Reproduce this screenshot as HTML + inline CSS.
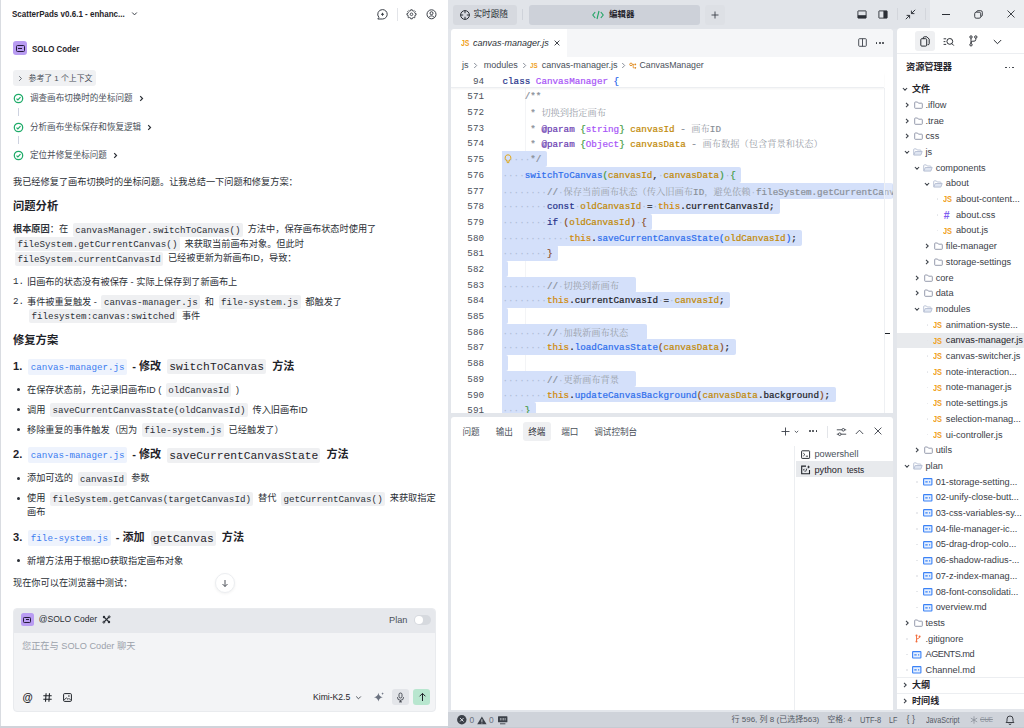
<!DOCTYPE html>
<html lang="zh">
<head>
<meta charset="utf-8">
<title>ScatterPads</title>
<style>
*{box-sizing:border-box;margin:0;padding:0}
html,body{width:1024px;height:728px;overflow:hidden}
body{background:#e3e6eb;font-family:"Liberation Sans","Noto Sans CJK SC",sans-serif;font-size:9.2px;color:#2b2f36;position:relative}
.abs{position:absolute}
svg{display:block;overflow:visible}
code,.mono{font-family:"Liberation Mono","Noto Sans CJK SC",monospace}
#left{position:absolute;left:0;top:0;width:448px;height:726px;background:#fff}
#topbar{position:absolute;left:0;top:0;width:0;height:0}
#editor{position:absolute;left:451px;top:29px;width:442px;height:384px;background:#fff;border-radius:4px 4px 0 0;overflow:hidden}
#term{position:absolute;left:451px;top:417px;width:442px;height:292.5px;background:#fff;overflow:hidden;border-radius:3px 3px 0 0}
#explorer{position:absolute;left:897px;top:28px;width:127px;height:681px;background:#fff;border-radius:4px 0 0 0;overflow:hidden}
#status{position:absolute;left:0;top:0;width:0;height:0}
.st{line-height:14px;font-size:8.55px;color:#4a505a;white-space:nowrap}
.p{line-height:14px;font-size:9.2px;color:#2b2f36;white-space:nowrap}
.p code{font-size:9.2px;line-height:9px;background:#eff0f2;border-radius:2px;padding:1.5px 2.5px;margin:0 2px;color:#2b2f36}
.h2{line-height:16px;font-size:11.3px;font-weight:bold;color:#1f2329;white-space:nowrap}
.h3{line-height:16px;font-size:11.1px;font-weight:bold;color:#1f2329;white-space:nowrap}
.h3 code{font-weight:normal;font-size:11.3px;line-height:10px;background:#eff0f2;border-radius:2px;padding:1.5px 2px;margin:0 3px}
.h3 code.lk{font-size:9.2px;color:#3b7cf0;background:#eef3fd;padding:2.5px 2.5px;margin:0 2px 0 3px;position:relative;top:-0.5px}
.bl{width:3px;height:3px;border-radius:2px;background:#2b2f36}
/* code */
.cl,.ln{font-family:"Liberation Mono","Noto Serif CJK SC",monospace;font-size:9.26px;line-height:15.69px;white-space:pre;color:#1f2329;-webkit-text-stroke:0.22px currentColor}
.ln{text-align:right;color:#4a505a;-webkit-text-stroke:0}
.cl .cmz{font-family:"Noto Serif CJK SC",serif;font-size:9.26px;color:#9aa0a9;-webkit-text-stroke:0}
.cm{color:#8a9099}.kw{color:#27348b}.ty{color:#a855f7}.fn{color:#2f6fed}.va{color:#c28a07}.th{color:#d08a0a}.tx{color:#1f2329}
.tag{color:#6d3fb3}.b1{color:#2563eb}.b2{color:#3f9a3f}.b3{color:#8a4b1f}
.wsd{color:#aebcd6;-webkit-text-stroke:0}
.sel{background:#d4e0fa;border-radius:0 2px 2px 0}
</style>
</head>
<body>
<div id="left"><!--LEFT-->
<div class="abs" style="left:0;top:0;width:1px;height:728px;background:#d9dce1"></div>
<!-- header -->
<div class="abs ttl" style="left:12px;top:7px;line-height:14px;font-size:9.3px;font-weight:bold;color:#1f2329;transform:scaleX(0.862);transform-origin:0 0;white-space:nowrap">ScatterPads v0.6.1 - enhanc...</div>
<svg class="abs" style="left:131px;top:11px" width="7" height="6" viewBox="0 0 7 6"><path d="M1.2 1.5 L3.5 3.9 L5.8 1.5" fill="none" stroke="#3b4048" stroke-width="1"/></svg>
<svg class="abs" style="left:376px;top:8px" width="13" height="13" viewBox="0 0 13 13"><path d="M6.5 1.6a4.7 4.7 0 1 1 0 9.4H1.8l1.1-1.6A4.7 4.7 0 0 1 6.5 1.6z" fill="none" stroke="#3b4048" stroke-width="1"/><path d="M6.5 4.8v3M5 6.3h3" stroke="#3b4048" stroke-width="1" fill="none"/></svg>
<div class="abs" style="left:397px;top:8px;width:1px;height:13px;background:#e3e5e9"></div>
<svg class="abs" style="left:405px;top:8px" width="13" height="13" viewBox="0 0 13 13"><path d="M5.71 1.77 L7.29 1.77 L7.36 2.70 L8.43 3.15 L9.15 2.54 L10.26 3.65 L9.65 4.37 L10.10 5.44 L11.03 5.51 L11.03 7.09 L10.10 7.16 L9.65 8.23 L10.26 8.95 L9.15 10.06 L8.43 9.45 L7.36 9.90 L7.29 10.83 L5.71 10.83 L5.64 9.90 L4.57 9.45 L3.85 10.06 L2.74 8.95 L3.35 8.23 L2.90 7.16 L1.97 7.09 L1.97 5.51 L2.90 5.44 L3.35 4.37 L2.74 3.65 L3.85 2.54 L4.57 3.15 L5.64 2.70z" fill="none" stroke="#3b4048" stroke-width="0.95" stroke-linejoin="round"/><circle cx="6.5" cy="6.3" r="1.3" fill="none" stroke="#3b4048" stroke-width="0.9"/></svg>
<svg class="abs" style="left:425px;top:8px" width="13" height="13" viewBox="0 0 13 13"><circle cx="6.5" cy="6.3" r="4.5" fill="none" stroke="#3b4048" stroke-width="1"/><circle cx="6.5" cy="5.2" r="1.5" fill="none" stroke="#3b4048" stroke-width="1"/><path d="M3.7 9.7c.6-1.3 1.5-1.8 2.8-1.8s2.2.5 2.8 1.8" fill="none" stroke="#3b4048" stroke-width="1"/></svg>
<!-- SOLO coder -->
<div class="abs" style="left:13px;top:41px;width:14px;height:14px;border-radius:3px;background:#b99cf2"></div>
<div class="abs" style="left:15.5px;top:45px;width:9px;height:6.5px;border-radius:1.5px;border:1.5px solid #241a3a;background:#b99cf2"></div>
<div class="abs" style="left:18.3px;top:47.6px;width:3.4px;height:1.3px;background:#241a3a"></div>
<div class="abs" style="left:31.5px;top:41px;line-height:15px;font-size:9.5px;font-weight:bold;color:#1f2329;transform:scaleX(0.83);transform-origin:0 0;white-space:nowrap">SOLO Coder</div>
<!-- pill -->
<div class="abs" style="left:13px;top:70px;width:83px;height:15.5px;border-radius:3px;background:#f0f1f3"></div>
<svg class="abs" style="left:17.5px;top:75px" width="5" height="7" viewBox="0 0 5 7"><path d="M1.2 1.2 L3.5 3.5 L1.2 5.8" fill="none" stroke="#5a616b" stroke-width="0.9"/></svg>
<div class="abs" style="left:28.5px;top:71.5px;line-height:14px;font-size:7.9px;color:#4a505a;white-space:nowrap">参考了 1 个上下文</div>
<!-- steps -->
<svg class="abs" style="left:12.5px;top:93px" width="11" height="11" viewBox="0 0 11 11"><circle cx="5.5" cy="5.5" r="4.2" fill="none" stroke="#1fab69" stroke-width="1.25"/><path d="M3.5 5.6 L4.9 7 L7.5 4.2" fill="none" stroke="#1fab69" stroke-width="1.2"/></svg>
<div class="abs st" style="left:30px;top:91px">调查画布切换时的坐标问题</div>
<svg class="abs" style="left:138.5px;top:95px" width="5" height="7" viewBox="0 0 5 7"><path d="M1.2 1.2 L3.5 3.5 L1.2 5.8" fill="none" stroke="#2b2f36" stroke-width="1.2"/></svg>
<div class="abs" style="left:18px;top:108px;width:1px;height:8px;background:#cdd2e0"></div>
<svg class="abs" style="left:12.5px;top:121.5px" width="11" height="11" viewBox="0 0 11 11"><circle cx="5.5" cy="5.5" r="4.2" fill="none" stroke="#1fab69" stroke-width="1.25"/><path d="M3.5 5.6 L4.9 7 L7.5 4.2" fill="none" stroke="#1fab69" stroke-width="1.2"/></svg>
<div class="abs st" style="left:30px;top:119.5px">分析画布坐标保存和恢复逻辑</div>
<svg class="abs" style="left:147px;top:123.5px" width="5" height="7" viewBox="0 0 5 7"><path d="M1.2 1.2 L3.5 3.5 L1.2 5.8" fill="none" stroke="#2b2f36" stroke-width="1.2"/></svg>
<div class="abs" style="left:18px;top:136px;width:1px;height:8px;background:#cdd2e0"></div>
<svg class="abs" style="left:12.5px;top:150px" width="11" height="11" viewBox="0 0 11 11"><circle cx="5.5" cy="5.5" r="4.2" fill="none" stroke="#1fab69" stroke-width="1.25"/><path d="M3.5 5.6 L4.9 7 L7.5 4.2" fill="none" stroke="#1fab69" stroke-width="1.2"/></svg>
<div class="abs st" style="left:30px;top:148px">定位并修复坐标问题</div>
<svg class="abs" style="left:112.5px;top:152px" width="5" height="7" viewBox="0 0 5 7"><path d="M1.2 1.2 L3.5 3.5 L1.2 5.8" fill="none" stroke="#2b2f36" stroke-width="1.2"/></svg>
<!-- content -->
<div class="abs p" style="left:13px;top:174.5px">我已经修复了画布切换时的坐标问题。让我总结一下问题和修复方案：</div>
<div class="abs h2" style="left:13px;top:198px">问题分析</div>
<div class="abs p" style="left:13px;top:222.3px;white-space:nowrap;line-height:14.5px"><b>根本原因</b>：在 <code>canvasManager.switchToCanvas()</code> 方法中，保存画布状态时使用了<br><code>fileSystem.getCurrentCanvas()</code> 来获取当前画布对象。但此时<br><code>fileSystem.currentCanvasId</code> 已经被更新为新画布ID，导致：</div>
<div class="abs p mono" style="left:13px;top:274.5px">1.</div>
<div class="abs p" style="left:27px;top:274.5px">旧画布的状态没有被保存 - 实际上保存到了新画布上</div>
<div class="abs p mono" style="left:13px;top:294.5px">2.</div>
<div class="abs p" style="left:27px;top:294.5px;white-space:nowrap;line-height:14px">事件被重复触发 - <code>canvas-manager.js</code> 和 <code>file-system.js</code> 都触发了<br><code>filesystem:canvas:switched</code> 事件</div>
<div class="abs h2" style="left:13px;top:332px">修复方案</div>
<div class="abs h3" style="left:13px;top:357.5px">1. <code class="lk">canvas-manager.js</code> - 修改 <code>switchToCanvas</code> 方法</div>
<div class="abs bl" style="left:16.5px;top:388px"></div><div class="abs p" style="left:27px;top:382.5px">在保存状态前，先记录旧画布ID ( <code>oldCanvasId</code> )</div>
<div class="abs bl" style="left:16.5px;top:408px"></div><div class="abs p" style="left:27px;top:402.5px">调用 <code>saveCurrentCanvasState(oldCanvasId)</code> 传入旧画布ID</div>
<div class="abs bl" style="left:16.5px;top:428px"></div><div class="abs p" style="left:27px;top:422.5px">移除重复的事件触发（因为 <code>file-system.js</code> 已经触发了）</div>
<div class="abs h3" style="left:13px;top:446px">2. <code class="lk">canvas-manager.js</code> - 修改 <code>saveCurrentCanvasState</code> 方法</div>
<div class="abs bl" style="left:16.5px;top:476.5px"></div><div class="abs p" style="left:27px;top:471px">添加可选的 <code>canvasId</code> 参数</div>
<div class="abs bl" style="left:16.5px;top:496.5px"></div><div class="abs p" style="left:27px;top:491px;white-space:nowrap;line-height:14px">使用 <code>fileSystem.getCanvas(targetCanvasId)</code> 替代 <code>getCurrentCanvas()</code> 来获取指定<br>画布</div>
<div class="abs h3" style="left:13px;top:529px">3. <code class="lk">file-system.js</code> - 添加 <code>getCanvas</code> 方法</div>
<div class="abs bl" style="left:16.5px;top:559px"></div><div class="abs p" style="left:27px;top:553.5px">新增方法用于根据ID获取指定画布对象</div>
<div class="abs p" style="left:13px;top:576.3px">现在你可以在浏览器中测试：</div>
<div class="abs" style="left:214.5px;top:573.3px;width:20px;height:20px;border-radius:10px;background:#fff;border:1px solid #eceef1;box-shadow:0 1px 3px rgba(0,0,0,.06)"></div>
<svg class="abs" style="left:220.5px;top:579px" width="8" height="9" viewBox="0 0 8 9"><path d="M4 1v6.5M1.5 5 L4 7.5 L6.5 5" fill="none" stroke="#3b4048" stroke-width="0.9"/></svg>
<!-- input box -->
<div class="abs" style="left:13px;top:608px;width:423px;height:104px;border-radius:4px;background:#f3f4f6;border:1px solid #e9ebee;overflow:hidden"><div style="height:23.5px;background:#e6e8ec"></div></div>
<div class="abs" style="left:21px;top:613px;width:12.5px;height:12.5px;border-radius:2.5px;background:#b99cf2"></div>
<div class="abs" style="left:23.2px;top:616.5px;width:8px;height:6px;border-radius:1.3px;border:1.4px solid #241a3a"></div>
<div class="abs" style="left:25.8px;top:618.9px;width:2.9px;height:1.2px;background:#241a3a"></div>
<div class="abs" style="left:38.7px;top:612.3px;line-height:14px;font-size:8.6px;color:#2b2f36;white-space:nowrap">@SOLO Coder</div>
<svg class="abs" style="left:101.5px;top:615px" width="9" height="9" viewBox="0 0 9 9"><path d="M1.5 1.5 L7.5 7.5 M7.5 1.5 L1.5 7.5" stroke="#2b2f36" stroke-width="1.1" fill="none"/><circle cx="2" cy="2" r="1.2" fill="#2b2f36"/><circle cx="7" cy="7" r="1.2" fill="#2b2f36"/><circle cx="7.2" cy="1.8" r="1" fill="none" stroke="#2b2f36" stroke-width="0.8"/><circle cx="1.8" cy="7.2" r="1" fill="none" stroke="#2b2f36" stroke-width="0.8"/></svg>
<div class="abs" style="left:389px;top:612.5px;line-height:14px;font-size:9.2px;color:#4a505a">Plan</div>
<div class="abs" style="left:413.7px;top:614.5px;width:17px;height:10px;border-radius:5px;background:#d6d9de"></div>
<div class="abs" style="left:414.7px;top:615.5px;width:8px;height:8px;border-radius:4px;background:#fff"></div>
<div class="abs" style="left:22px;top:638.5px;line-height:14px;font-size:9.2px;color:#9ca2ab">您正在与 SOLO Coder 聊天</div>
<!-- bottom icons -->
<div class="abs" style="left:22px;top:690px;width:11px;line-height:14px;font-size:10.5px;color:#1f2329;text-align:center;font-weight:bold">@</div>
<svg class="abs" style="left:43px;top:692.5px" width="9" height="9" viewBox="0 0 9 9"><path d="M3.1 0.3 L2.5 8.7 M6.5 0.3 L5.9 8.7 M0.3 2.8h8.4M0.3 6.2h8.4" stroke="#1f2329" stroke-width="1.1" fill="none"/></svg>
<svg class="abs" style="left:62.5px;top:692.5px" width="9" height="9" viewBox="0 0 9 9"><rect x="0.6" y="0.6" width="7.8" height="7.8" rx="1" fill="none" stroke="#1f2329" stroke-width="1"/><path d="M1 7.2 L3.4 4.8 L5 6.4 L6 5.4 L8 7.4" fill="none" stroke="#1f2329" stroke-width="0.9"/><circle cx="5.9" cy="3" r="0.8" fill="#1f2329"/></svg>
<div class="abs" style="left:313px;top:690px;line-height:14px;font-size:8.6px;color:#1f2329">Kimi-K2.5</div>
<svg class="abs" style="left:354.5px;top:694.5px" width="7" height="6" viewBox="0 0 7 6"><path d="M1.2 1.5 L3.5 3.8 L5.8 1.5" fill="none" stroke="#3b4048" stroke-width="0.9"/></svg>
<svg class="abs" style="left:373px;top:691px" width="12" height="12" viewBox="0 0 12 12"><path d="M5.4 1.8 Q5.9 5.6 9.8 6.2 Q5.9 6.8 5.4 10.6 Q4.9 6.8 1 6.2 Q4.9 5.6 5.4 1.8z" fill="#6b7280"/><path d="M9.6 1.2l.4 1 .9.4-.9.4-.4 1-.4-1-.9-.4.9-.4z" fill="#6b7280"/></svg>
<div class="abs" style="left:392px;top:688.7px;width:17px;height:16.5px;border-radius:3px;background:#e3e5e9"></div>
<svg class="abs" style="left:396px;top:691.5px" width="9" height="11" viewBox="0 0 9 11"><rect x="3" y="1" width="3" height="5" rx="1.5" fill="none" stroke="#3b4048" stroke-width="0.9"/><path d="M1.4 5.2a3.1 3.1 0 0 0 6.2 0M4.5 8.3v1.6M3 9.9h3" fill="none" stroke="#3b4048" stroke-width="0.9"/></svg>
<div class="abs" style="left:413.2px;top:688.7px;width:17px;height:16.5px;border-radius:3px;background:#b8e6cf"></div>
<svg class="abs" style="left:417.5px;top:692px" width="9" height="10" viewBox="0 0 9 10"><path d="M4.5 9V1.5M1.6 4.3 L4.5 1.4 L7.4 4.3" fill="none" stroke="#1f2329" stroke-width="1"/></svg>
<!-- bottom/right borders -->
<div class="abs" style="left:0;top:726px;width:449px;height:2px;background:#d0d3da"></div>

<!--/LEFT--></div>
<div id="topbar"><!--TOPBAR-->
<div class="abs" style="left:448px;top:0;width:482px;height:29px;background:#e1e4e9"></div>
<div class="abs" style="left:930px;top:0;width:94px;height:28px;background:#eceef1"></div>
<div class="abs" style="left:453px;top:4.5px;width:63.5px;height:20px;border-radius:3px;background:#d6d9df"></div>
<svg class="abs" style="left:458.5px;top:8.5px" width="12" height="12" viewBox="0 0 12 12"><circle cx="6" cy="6" r="4.4" fill="none" stroke="#2b2f36" stroke-width="1"/><path d="M6 1.6v2.6M6 7.8v2.6M1.6 6h2.6M7.8 6h2.6" stroke="#2b2f36" stroke-width="1"/></svg>
<div class="abs" style="left:473.5px;top:7.3px;line-height:14px;font-size:8.6px;color:#2b2f36;white-space:nowrap">实时跟随</div>
<div class="abs" style="left:522px;top:9px;width:1px;height:11px;background:#cfd3da"></div>
<div class="abs" style="left:528.7px;top:4.5px;width:171px;height:20px;border-radius:3px;background:#cdd1d9"></div>
<svg class="abs" style="left:592px;top:9.5px" width="12" height="10" viewBox="0 0 12 10"><path d="M3.2 2 L0.8 5 L3.2 8 M8.8 2 L11.2 5 L8.8 8 M7 1 L5 9" fill="none" stroke="#22a565" stroke-width="1.1"/></svg>
<div class="abs" style="left:609px;top:7.3px;line-height:14px;font-size:8.5px;font-weight:bold;color:#1f2329;white-space:nowrap">编辑器</div>
<div class="abs" style="left:705px;top:4.5px;width:20px;height:20px;border-radius:3px;background:#dde0e5"></div>
<svg class="abs" style="left:711px;top:10.5px" width="8" height="8" viewBox="0 0 8 8"><path d="M4 0.5v7M0.5 4h7" stroke="#3b4048" stroke-width="0.9"/></svg>
<svg class="abs" style="left:857px;top:9.5px" width="10" height="9" viewBox="0 0 10 9"><rect x="0.9" y="0.9" width="8.2" height="7.2" rx="0.3" fill="none" stroke="#2b2f36" stroke-width="0.9"/><rect x="0.9" y="5.2" width="8.2" height="2.9" fill="#2b2f36"/></svg>
<svg class="abs" style="left:877.5px;top:9.5px" width="10" height="9" viewBox="0 0 10 9"><rect x="0.9" y="0.9" width="8.2" height="7.2" rx="0.3" fill="none" stroke="#2b2f36" stroke-width="0.9"/><rect x="5.4" y="0.9" width="3.7" height="7.2" fill="#2b2f36"/></svg>
<div class="abs" style="left:896.5px;top:8px;width:1px;height:12px;background:#d3d6dc"></div>
<svg class="abs" style="left:905.3px;top:8.7px" width="11" height="11" viewBox="0 0 11 11"><path d="M10.2 0.8 L6.4 4.6 M6.4 1.6 V4.6 H9.4 M0.8 10.2 L4.6 6.4 M4.6 9.4 V6.4 H1.6" fill="none" stroke="#2b2f36" stroke-width="0.95"/></svg>
<div class="abs" style="left:924.5px;top:8px;width:1px;height:12px;background:#d3d6dc"></div>
<div class="abs" style="left:941.5px;top:13.5px;width:8.5px;height:1px;background:#2b2f36"></div>
<svg class="abs" style="left:974px;top:9.5px" width="9" height="9" viewBox="0 0 9 9"><rect x="0.7" y="2.2" width="6" height="6" rx="1.5" fill="none" stroke="#2b2f36" stroke-width="0.9"/><path d="M2.5 2 Q2.7 0.7 4 0.7 H6.8 Q8.3 0.7 8.3 2.2 V5 Q8.3 6.3 7 6.5" fill="none" stroke="#2b2f36" stroke-width="0.9"/></svg>
<svg class="abs" style="left:1007px;top:10px" width="8" height="8" viewBox="0 0 8 8"><path d="M0.5 0.5 L7.5 7.5 M7.5 0.5 L0.5 7.5" stroke="#2b2f36" stroke-width="0.9"/></svg>
<!--/TOPBAR--></div>
<div id="editor"><!--EDITOR-->
<div class="abs" style="left:0.00px;top:0.00px;width:442px;height:27.5px;background:#f5f6f8"></div>
<div class="abs" style="left:0.00px;top:0.00px;width:115.5px;height:27.5px;background:#fff"></div>
<div class="abs" style="left:10.00px;top:7.30px;line-height:14px;font-size:8.6px;font-weight:bold;color:#f0a11c;transform:scaleX(.8);transform-origin:0 0">JS</div>
<div class="abs" style="left:22.00px;top:7.00px;line-height:14px;font-size:9.0px;font-style:italic;color:#2b2f36;white-space:nowrap">canvas-manager.js</div>
<svg class="abs" style="left:102.5px;top:11px" width="6" height="6" viewBox="0 0 6 6"><path d="M0.6 0.6 L5.4 5.4 M5.4 0.6 L0.6 5.4" stroke="#2b2f36" stroke-width="0.9"/></svg>
<svg class="abs" style="left:406.5px;top:9.299999999999997px" width="9" height="9" viewBox="0 0 9 9"><rect x="0.7" y="0.7" width="7.6" height="7.6" rx="0.8" fill="none" stroke="#3b4048" stroke-width="0.9"/><path d="M4.5 0.7v7.6" stroke="#3b4048" stroke-width="0.9"/></svg>
<div class="abs" style="left:424.60px;top:13.00px;width:1.9px;height:1.9px;border-radius:1px;background:#2b2f36"></div>
<div class="abs" style="left:428.00px;top:13.00px;width:1.9px;height:1.9px;border-radius:1px;background:#2b2f36"></div>
<div class="abs" style="left:431.40px;top:13.00px;width:1.9px;height:1.9px;border-radius:1px;background:#2b2f36"></div>
<div class="abs" style="left:11.00px;top:29.30px;line-height:14px;font-size:9.05px;color:#4a505a;white-space:nowrap">js</div>
<div class="abs" style="left:32.70px;top:29.30px;line-height:14px;font-size:9.05px;color:#4a505a;white-space:nowrap">modules</div>
<div class="abs" style="left:90.70px;top:29.30px;line-height:14px;font-size:9.05px;color:#4a505a;white-space:nowrap">canvas-manager.js</div>
<div class="abs" style="left:188.50px;top:29.30px;line-height:14px;font-size:9.05px;color:#4a505a;white-space:nowrap;font-size:8.75px">CanvasManager</div>
<svg class="abs" style="left:21.5px;top:33.3px" width="5" height="7" viewBox="0 0 5 7"><path d="M1.2 1 L3.7 3.5 L1.2 6" fill="none" stroke="#6b7280" stroke-width="0.8"/></svg>
<svg class="abs" style="left:71px;top:33.3px" width="5" height="7" viewBox="0 0 5 7"><path d="M1.2 1 L3.7 3.5 L1.2 6" fill="none" stroke="#6b7280" stroke-width="0.8"/></svg>
<svg class="abs" style="left:169.5px;top:33.3px" width="5" height="7" viewBox="0 0 5 7"><path d="M1.2 1 L3.7 3.5 L1.2 6" fill="none" stroke="#6b7280" stroke-width="0.8"/></svg>
<div class="abs" style="left:79.00px;top:29.80px;line-height:14px;font-size:7.8px;font-weight:bold;color:#f0a11c;transform:scaleX(.8);transform-origin:0 0">JS</div>
<svg class="abs" style="left:177.5px;top:32.5px" width="8" height="8" viewBox="0 0 8 8"><circle cx="2" cy="2.4" r="1.3" fill="none" stroke="#e08a1e" stroke-width="0.9"/><path d="M3.3 2.4H5.2 M4.2 2.4V5.8H5.2" fill="none" stroke="#e08a1e" stroke-width="0.8"/><circle cx="6.3" cy="2.4" r="0.9" fill="#e08a1e"/><circle cx="6.3" cy="5.8" r="0.9" fill="#e08a1e"/></svg>
<div class="abs" style="left:0;top:59px;width:442px;height:325px;overflow:hidden" id="code">
<div class="abs" style="left:73.72px;top:0.00px;width:1px;height:325.00px;background:#f3f4f6"></div>
<div class="abs" style="left:95.94px;top:157.31px;width:1px;height:0.00px;background:#f3f4f6"></div>
<div class="abs sel" style="left:50.70px;top:63.16px;width:45.14px;height:15.99px"></div>
<div class="abs sel" style="left:50.70px;top:78.85px;width:239.56px;height:15.99px"></div>
<div class="abs sel" style="left:50.70px;top:94.54px;width:391.50px;height:15.99px"></div>
<div class="abs sel" style="left:50.70px;top:110.23px;width:278.45px;height:15.99px"></div>
<div class="abs sel" style="left:50.70px;top:125.92px;width:150.68px;height:15.99px"></div>
<div class="abs sel" style="left:50.70px;top:141.62px;width:300.67px;height:15.99px"></div>
<div class="abs sel" style="left:50.70px;top:157.31px;width:56.25px;height:15.99px"></div>
<div class="abs sel" style="left:50.70px;top:173.00px;width:6.25px;height:15.99px"></div>
<div class="abs sel" style="left:50.70px;top:188.68px;width:134.02px;height:15.99px"></div>
<div class="abs sel" style="left:50.70px;top:204.38px;width:228.45px;height:15.99px"></div>
<div class="abs sel" style="left:50.70px;top:220.06px;width:6.25px;height:15.99px"></div>
<div class="abs sel" style="left:50.70px;top:235.75px;width:145.13px;height:15.99px"></div>
<div class="abs sel" style="left:50.70px;top:251.44px;width:234.01px;height:15.99px"></div>
<div class="abs sel" style="left:50.70px;top:267.13px;width:6.25px;height:15.99px"></div>
<div class="abs sel" style="left:50.70px;top:282.82px;width:134.02px;height:15.99px"></div>
<div class="abs sel" style="left:50.70px;top:298.51px;width:334.00px;height:15.99px"></div>
<div class="abs sel" style="left:50.70px;top:314.20px;width:34.03px;height:15.99px"></div>
<div class="abs ln" style="left:4px;top:1.41px;width:29px">571</div>
<div class="abs cl" style="left:51.50px;top:1.41px">    <span class="cm">/**</span></div>
<div class="abs ln" style="left:4px;top:17.09px;width:29px">572</div>
<div class="abs cl" style="left:51.50px;top:17.09px">     <span class="cm">* </span><span class="cmz">切换到指定画布</span></div>
<div class="abs ln" style="left:4px;top:32.78px;width:29px">573</div>
<div class="abs cl" style="left:51.50px;top:32.78px">     <span class="cm">* </span><span class="tag">@param</span> <span class="b2">{</span><span class="ty">string</span><span class="b2">}</span> <span class="va">canvasId</span><span class="cm"> - </span><span class="cmz">画布</span><span class="cm">ID</span></div>
<div class="abs ln" style="left:4px;top:48.47px;width:29px">574</div>
<div class="abs cl" style="left:51.50px;top:48.47px">     <span class="cm">* </span><span class="tag">@param</span> <span class="b2">{</span><span class="ty">Object</span><span class="b2">}</span> <span class="va">canvasData</span><span class="cm"> - </span><span class="cmz">画布数据（包含背景和状态）</span></div>
<div class="abs ln" style="left:4px;top:64.16px;width:29px">575</div>
<div class="abs cl" style="left:51.50px;top:64.16px"><span class="wsd">·····</span><span class="cm">*/</span></div>
<div class="abs ln" style="left:4px;top:79.85px;width:29px">576</div>
<div class="abs cl" style="left:51.50px;top:79.85px"><span class="wsd">····</span><span class="fn">switchToCanvas</span><span class="b2">(</span><span class="va">canvasId</span><span class="tx">,</span><span class="wsd">·</span><span class="va">canvasData</span><span class="b2">)</span><span class="wsd">·</span><span class="b2">{</span></div>
<div class="abs ln" style="left:4px;top:95.54px;width:29px">577</div>
<div class="abs cl" style="left:51.50px;top:95.54px"><span class="wsd">········</span><span class="cm">//</span><span class="wsd">·</span><span class="cmz">保存当前画布状态（传入旧画布</span><span class="cm">ID</span><span class="cmz">，避免依赖</span><span class="wsd">·</span><span class="cm">fileSystem.getCurrentCanvas()</span></div>
<div class="abs ln" style="left:4px;top:111.23px;width:29px">578</div>
<div class="abs cl" style="left:51.50px;top:111.23px"><span class="wsd">········</span><span class="kw">const</span><span class="wsd">·</span><span class="va">oldCanvasId</span><span class="wsd">·</span><span class="tx">=</span><span class="wsd">·</span><span class="th">this</span><span class="tx">.currentCanvasId;</span></div>
<div class="abs ln" style="left:4px;top:126.92px;width:29px">579</div>
<div class="abs cl" style="left:51.50px;top:126.92px"><span class="wsd">········</span><span class="kw">if</span><span class="wsd">·</span><span class="b3">(</span><span class="va">oldCanvasId</span><span class="b3">)</span><span class="wsd">·</span><span class="b3">{</span></div>
<div class="abs ln" style="left:4px;top:142.62px;width:29px">580</div>
<div class="abs cl" style="left:51.50px;top:142.62px"><span class="wsd">············</span><span class="th">this</span><span class="tx">.</span><span class="fn">saveCurrentCanvasState</span><span class="b1">(</span><span class="va">oldCanvasId</span><span class="b1">)</span><span class="tx">;</span></div>
<div class="abs ln" style="left:4px;top:158.31px;width:29px">581</div>
<div class="abs cl" style="left:51.50px;top:158.31px"><span class="wsd">········</span><span class="b3">}</span></div>
<div class="abs ln" style="left:4px;top:174.00px;width:29px">582</div>
<div class="abs cl" style="left:51.50px;top:174.00px"></div>
<div class="abs ln" style="left:4px;top:189.68px;width:29px">583</div>
<div class="abs cl" style="left:51.50px;top:189.68px"><span class="wsd">········</span><span class="cm">//</span><span class="wsd">·</span><span class="cmz">切换到新画布</span></div>
<div class="abs ln" style="left:4px;top:205.38px;width:29px">584</div>
<div class="abs cl" style="left:51.50px;top:205.38px"><span class="wsd">········</span><span class="th">this</span><span class="tx">.currentCanvasId</span><span class="wsd">·</span><span class="tx">=</span><span class="wsd">·</span><span class="va">canvasId</span><span class="tx">;</span></div>
<div class="abs ln" style="left:4px;top:221.06px;width:29px">585</div>
<div class="abs cl" style="left:51.50px;top:221.06px"></div>
<div class="abs ln" style="left:4px;top:236.75px;width:29px">586</div>
<div class="abs cl" style="left:51.50px;top:236.75px"><span class="wsd">········</span><span class="cm">//</span><span class="wsd">·</span><span class="cmz">加载新画布状态</span></div>
<div class="abs ln" style="left:4px;top:252.44px;width:29px">587</div>
<div class="abs cl" style="left:51.50px;top:252.44px"><span class="wsd">········</span><span class="th">this</span><span class="tx">.</span><span class="fn">loadCanvasState</span><span class="b3">(</span><span class="va">canvasData</span><span class="b3">)</span><span class="tx">;</span></div>
<div class="abs ln" style="left:4px;top:268.13px;width:29px">588</div>
<div class="abs cl" style="left:51.50px;top:268.13px"></div>
<div class="abs ln" style="left:4px;top:283.82px;width:29px">589</div>
<div class="abs cl" style="left:51.50px;top:283.82px"><span class="wsd">········</span><span class="cm">//</span><span class="wsd">·</span><span class="cmz">更新画布背景</span></div>
<div class="abs ln" style="left:4px;top:299.51px;width:29px">590</div>
<div class="abs cl" style="left:51.50px;top:299.51px"><span class="wsd">········</span><span class="th">this</span><span class="tx">.</span><span class="fn">updateCanvasBackground</span><span class="b3">(</span><span class="va">canvasData</span><span class="tx">.background</span><span class="b3">)</span><span class="tx">;</span></div>
<div class="abs ln" style="left:4px;top:315.20px;width:29px">591</div>
<div class="abs cl" style="left:51.50px;top:315.20px"><span class="wsd">····</span><span class="b2">}</span></div>
<svg class="abs" style="left:52.5px;top:65.66px" width="8" height="10" viewBox="0 0 8 10"><path d="M4 0.8a2.9 2.9 0 0 1 1.6 5.3v1H2.4v-1A2.9 2.9 0 0 1 4 0.8z" fill="none" stroke="#e0a512" stroke-width="1"/><path d="M2.8 8.6h2.4" stroke="#d9a514" stroke-width="0.9"/></svg>
<div class="abs" style="left:433px;top:0;width:8px;height:325px;background:rgba(255,255,255,.3);border-left:1px solid #eef0f3"></div>
<div class="abs" style="left:433.5px;top:244.5px;width:5px;height:1.3px;background:#1f2329"></div>
</div>
<div class="abs" style="left:0.00px;top:43.50px;width:433px;height:15.5px;background:#fff;border-bottom:1px solid #eceef1;box-shadow:0 1px 2px rgba(0,0,0,.05)"></div>
<div class="abs ln" style="left:4.00px;top:44.70px;width:29px">94</div>
<div class="abs cl" style="left:51.50px;top:44.70px;"><span class="kw">class</span> <span class="ty">CanvasManager</span> <span class="b1">{</span></div>
<!--/EDITOR--></div>
<div id="term"><!--TERM-->
<div class="abs" style="left:72.00px;top:4.70px;width:28.3px;height:19px;border-radius:3px;background:#eff0f2"></div>
<div class="abs" style="left:11.50px;top:7.70px;line-height:14px;font-size:8.6px;color:#4a505a;white-space:nowrap">问题</div>
<div class="abs" style="left:44.70px;top:7.70px;line-height:14px;font-size:8.6px;color:#4a505a;white-space:nowrap">输出</div>
<div class="abs" style="left:77.20px;top:7.70px;line-height:14px;font-size:8.6px;color:#4a505a;white-space:nowrap;color:#2b2f36">终端</div>
<div class="abs" style="left:110.20px;top:7.70px;line-height:14px;font-size:8.6px;color:#4a505a;white-space:nowrap">端口</div>
<div class="abs" style="left:143.20px;top:7.70px;line-height:14px;font-size:8.6px;color:#4a505a;white-space:nowrap">调试控制台</div>
<svg class="abs" style="left:329.50px;top:9.80px" width="9" height="9" viewBox="0 0 9 9"><path d="M4.5 0.5v8M0.5 4.5h8" stroke="#3b4048" stroke-width="0.9"/></svg>
<svg class="abs" style="left:343.00px;top:12.50px" width="5" height="4" viewBox="0 0 5 4"><path d="M0.8 0.8 L2.5 2.6 L4.2 0.8" fill="none" stroke="#3b4048" stroke-width="0.8"/></svg>
<div class="abs" style="left:357.80px;top:13.30px;width:1.9px;height:1.9px;border-radius:1px;background:#2b2f36"></div>
<div class="abs" style="left:361.20px;top:13.30px;width:1.9px;height:1.9px;border-radius:1px;background:#2b2f36"></div>
<div class="abs" style="left:364.60px;top:13.30px;width:1.9px;height:1.9px;border-radius:1px;background:#2b2f36"></div>
<div class="abs" style="left:375.50px;top:9.00px;width:1px;height:12px;background:#e3e5e9"></div>
<svg class="abs" style="left:384.50px;top:9.50px" width="11" height="10" viewBox="0 0 11 10"><path d="M0.8 2.8H6M8.6 2.8H10.2M0.8 7.2H2.4M5 7.2H10.2" stroke="#3b4048" stroke-width="0.9" fill="none"/><circle cx="7.3" cy="2.8" r="1.3" fill="none" stroke="#3b4048" stroke-width="0.9"/><circle cx="3.7" cy="7.2" r="1.3" fill="none" stroke="#3b4048" stroke-width="0.9"/></svg>
<svg class="abs" style="left:404.00px;top:11.50px" width="9" height="6" viewBox="0 0 9 6"><path d="M0.8 5 L4.5 1.2 L8.2 5" fill="none" stroke="#3b4048" stroke-width="0.9"/></svg>
<svg class="abs" style="left:422.70px;top:10.20px" width="8" height="8" viewBox="0 0 8 8"><path d="M0.6 0.6 L7.4 7.4 M7.4 0.6 L0.6 7.4" stroke="#3b4048" stroke-width="0.9"/></svg>
<div class="abs" style="left:343.30px;top:28.50px;width:1px;height:265px;background:#eceef1"></div>
<div class="abs" style="left:344.50px;top:44.20px;width:98px;height:15.5px;background:#e8eaed"></div>
<svg class="abs" style="left:350.00px;top:33.00px" width="9" height="9" viewBox="0 0 9 9"><rect x="0.6" y="0.8" width="8" height="7.6" rx="0.6" fill="none" stroke="#2b2f36" stroke-width="1"/><path d="M2.3 3.2 L3.9 4.6 L2.3 6 M4.8 6.2h2.2" fill="none" stroke="#2b2f36" stroke-width="0.9"/></svg>
<div class="abs" style="left:363.50px;top:30.30px;line-height:14px;font-size:9.2px;color:#4a505a;white-space:nowrap">powershell</div>
<svg class="abs" style="left:350.00px;top:48.00px" width="10" height="9" viewBox="0 0 10 9"><path d="M5 1.1H0.7V8.7H8.5V5" fill="none" stroke="#1f2329" stroke-width="1.1"/><path d="M3.6 3.8 L2.4 5 L3.6 6.2 M5.8 3.6 L4.6 6.6" fill="none" stroke="#1f2329" stroke-width="0.9"/><path d="M7.6 0.2l.5 1.3 1.3.5-1.3.5-.5 1.3-.5-1.3-1.3-.5 1.3-.5z" fill="#1f2329"/></svg>
<div class="abs" style="left:363.50px;top:45.50px;line-height:14px;font-size:9.2px;color:#1f2329;white-space:nowrap">python <span style="font-size:8.3px;margin-left:2px">tests</span></div>
<!--/TERM--></div>
<div id="explorer"><!--EXPLORER-->
<div class="abs" style="left:18.00px;top:3.00px;width:19.7px;height:20px;border-radius:3px;background:#eff0f2"></div>
<svg class="abs" style="left:22.50px;top:8.00px" width="10" height="11" viewBox="0 0 10 11"><path d="M3.3 2.6V1.8a1 1 0 0 1 1-1h2.6l2.3 2.3v4.6a1 1 0 0 1-1 1H7.6" fill="none" stroke="#1f2329" stroke-width="0.95"/><rect x="0.8" y="2.7" width="5.9" height="7.4" rx="1" fill="none" stroke="#1f2329" stroke-width="0.95"/></svg>
<svg class="abs" style="left:46.00px;top:8.50px" width="12" height="10" viewBox="0 0 12 10"><path d="M0.6 1.8H3.2M0.6 4.6H2.4M0.6 7.4H3.2" stroke="#1f2329" stroke-width="0.9"/><circle cx="6.8" cy="4.4" r="2.9" fill="none" stroke="#1f2329" stroke-width="0.95"/><path d="M8.9 6.6 L10.8 8.6" stroke="#1f2329" stroke-width="0.95"/></svg>
<svg class="abs" style="left:71.50px;top:7.30px" width="9" height="12" viewBox="0 0 9 12"><circle cx="2" cy="2" r="1.2" fill="none" stroke="#1f2329" stroke-width="0.9"/><circle cx="6.8" cy="2" r="1.2" fill="none" stroke="#1f2329" stroke-width="0.9"/><circle cx="2" cy="9.8" r="1.2" fill="none" stroke="#1f2329" stroke-width="0.9"/><path d="M2 3.2v5.4M6.8 3.2v1.2a1.8 1.8 0 0 1-1.8 1.8H3.8A1.8 1.8 0 0 0 2 8" fill="none" stroke="#1f2329" stroke-width="0.9"/></svg>
<svg class="abs" style="left:95.50px;top:10.50px" width="9" height="6" viewBox="0 0 9 6"><path d="M0.8 1 L4.5 4.7 L8.2 1" fill="none" stroke="#1f2329" stroke-width="0.95"/></svg>
<div class="abs" style="left:0.00px;top:25.00px;width:127px;height:1px;background:#eceef1"></div>
<div class="abs" style="left:9.00px;top:32.30px;line-height:14px;font-size:9.2px;font-weight:bold;color:#1f2329;white-space:nowrap">资源管理器</div>
<div class="abs" style="left:108.20px;top:38.50px;width:1.9px;height:1.9px;border-radius:1px;background:#2b2f36"></div>
<div class="abs" style="left:111.60px;top:38.50px;width:1.9px;height:1.9px;border-radius:1px;background:#2b2f36"></div>
<div class="abs" style="left:115.00px;top:38.50px;width:1.9px;height:1.9px;border-radius:1px;background:#2b2f36"></div>
<div class="abs" style="left:15.00px;top:54.00px;line-height:14px;font-size:9.1px;font-weight:bold;color:#1f2329;white-space:nowrap">文件</div>
<svg class="abs" style="left:4.70px;top:59.30px" width="6" height="5" viewBox="0 0 6 5"><path d="M0.9 1 L3 3.2 L5.1 1" fill="none" stroke="#3b4048" stroke-width="1.05"/></svg>
<svg class="abs" style="left:8.00px;top:74.00px" width="5" height="6" viewBox="0 0 5 6"><path d="M1 0.9 L3.2 3 L1 5.1" fill="none" stroke="#3b4048" stroke-width="1.05"/></svg>
<svg class="abs" style="left:16.50px;top:73.00px" width="9" height="8" viewBox="0 0 9 8"><path d="M0.7 1.6a.6.6 0 0 1 .6-.6h2.2l1 1.2h3.2a.6.6 0 0 1 .6.6v3.9a.6.6 0 0 1-.6.6H1.3a.6.6 0 0 1-.6-.6z" fill="none" stroke="#8a90a4" stroke-width="0.9"/></svg>
<div class="abs" style="left:28.50px;top:69.80px;line-height:14px;font-size:9.2px;color:#3b4048;white-space:nowrap">.iflow</div>
<svg class="abs" style="left:8.00px;top:89.70px" width="5" height="6" viewBox="0 0 5 6"><path d="M1 0.9 L3.2 3 L1 5.1" fill="none" stroke="#3b4048" stroke-width="1.05"/></svg>
<svg class="abs" style="left:16.50px;top:88.70px" width="9" height="8" viewBox="0 0 9 8"><path d="M0.7 1.6a.6.6 0 0 1 .6-.6h2.2l1 1.2h3.2a.6.6 0 0 1 .6.6v3.9a.6.6 0 0 1-.6.6H1.3a.6.6 0 0 1-.6-.6z" fill="none" stroke="#8a90a4" stroke-width="0.9"/></svg>
<div class="abs" style="left:28.50px;top:85.50px;line-height:14px;font-size:9.2px;color:#3b4048;white-space:nowrap">.trae</div>
<svg class="abs" style="left:8.00px;top:105.40px" width="5" height="6" viewBox="0 0 5 6"><path d="M1 0.9 L3.2 3 L1 5.1" fill="none" stroke="#3b4048" stroke-width="1.05"/></svg>
<svg class="abs" style="left:16.50px;top:104.40px" width="9" height="8" viewBox="0 0 9 8"><path d="M0.7 1.6a.6.6 0 0 1 .6-.6h2.2l1 1.2h3.2a.6.6 0 0 1 .6.6v3.9a.6.6 0 0 1-.6.6H1.3a.6.6 0 0 1-.6-.6z" fill="none" stroke="#8a90a4" stroke-width="0.9"/></svg>
<div class="abs" style="left:28.50px;top:101.20px;line-height:14px;font-size:9.2px;color:#3b4048;white-space:nowrap">css</div>
<svg class="abs" style="left:7.00px;top:122.10px" width="6" height="5" viewBox="0 0 6 5"><path d="M0.9 1 L3 3.2 L5.1 1" fill="none" stroke="#3b4048" stroke-width="1.05"/></svg>
<svg class="abs" style="left:15.80px;top:120.10px" width="10" height="8" viewBox="0 0 10 8"><path d="M0.7 6.8V1.5a.6.6 0 0 1 .6-.6h2l1 1.1h3a.6.6 0 0 1 .6.6v.7" fill="none" stroke="#b4bdd3" stroke-width="0.9"/><path d="M0.8 7.1 L2.2 3.5h7l-1.4 3.6z" fill="#dfe5f1" stroke="#b4bdd3" stroke-width="0.9" stroke-linejoin="round"/></svg>
<div class="abs" style="left:28.50px;top:116.90px;line-height:14px;font-size:9.2px;color:#3b4048;white-space:nowrap">js</div>
<svg class="abs" style="left:17.15px;top:137.80px" width="6" height="5" viewBox="0 0 6 5"><path d="M0.9 1 L3 3.2 L5.1 1" fill="none" stroke="#3b4048" stroke-width="1.05"/></svg>
<svg class="abs" style="left:25.95px;top:135.80px" width="10" height="8" viewBox="0 0 10 8"><path d="M0.7 6.8V1.5a.6.6 0 0 1 .6-.6h2l1 1.1h3a.6.6 0 0 1 .6.6v.7" fill="none" stroke="#b4bdd3" stroke-width="0.9"/><path d="M0.8 7.1 L2.2 3.5h7l-1.4 3.6z" fill="#dfe5f1" stroke="#b4bdd3" stroke-width="0.9" stroke-linejoin="round"/></svg>
<div class="abs" style="left:38.65px;top:132.60px;line-height:14px;font-size:9.2px;color:#3b4048;white-space:nowrap">components</div>
<svg class="abs" style="left:27.30px;top:153.50px" width="6" height="5" viewBox="0 0 6 5"><path d="M0.9 1 L3 3.2 L5.1 1" fill="none" stroke="#3b4048" stroke-width="1.05"/></svg>
<svg class="abs" style="left:36.10px;top:151.50px" width="10" height="8" viewBox="0 0 10 8"><path d="M0.7 6.8V1.5a.6.6 0 0 1 .6-.6h2l1 1.1h3a.6.6 0 0 1 .6.6v.7" fill="none" stroke="#b4bdd3" stroke-width="0.9"/><path d="M0.8 7.1 L2.2 3.5h7l-1.4 3.6z" fill="#dfe5f1" stroke="#b4bdd3" stroke-width="0.9" stroke-linejoin="round"/></svg>
<div class="abs" style="left:48.80px;top:148.30px;line-height:14px;font-size:9.2px;color:#3b4048;white-space:nowrap">about</div>
<div class="abs" style="left:39.65px;top:170.40px;width:1.6px;height:1.6px;border-radius:1px;background:#e3e5e9"></div>
<div class="abs" style="left:45.85px;top:164.20px;line-height:14px;font-size:9.5px;color:#f0a11c;font-weight:bold;transform:scaleX(0.78);transform-origin:0 0">JS</div>
<div class="abs" style="left:58.95px;top:164.00px;line-height:14px;font-size:9.2px;color:#3b4048;white-space:nowrap">about-content...</div>
<div class="abs" style="left:39.65px;top:186.10px;width:1.6px;height:1.6px;border-radius:1px;background:#e3e5e9"></div>
<div class="abs" style="left:46.65px;top:179.70px;line-height:14px;font-size:10.5px;font-weight:bold;color:#7c5cf0">#</div>
<div class="abs" style="left:58.95px;top:179.70px;line-height:14px;font-size:9.2px;color:#3b4048;white-space:nowrap">about.css</div>
<div class="abs" style="left:39.65px;top:201.80px;width:1.6px;height:1.6px;border-radius:1px;background:#e3e5e9"></div>
<div class="abs" style="left:45.85px;top:195.60px;line-height:14px;font-size:9.5px;color:#f0a11c;font-weight:bold;transform:scaleX(0.78);transform-origin:0 0">JS</div>
<div class="abs" style="left:58.95px;top:195.40px;line-height:14px;font-size:9.2px;color:#3b4048;white-space:nowrap">about.js</div>
<svg class="abs" style="left:28.30px;top:215.30px" width="5" height="6" viewBox="0 0 5 6"><path d="M1 0.9 L3.2 3 L1 5.1" fill="none" stroke="#3b4048" stroke-width="1.05"/></svg>
<svg class="abs" style="left:36.80px;top:214.30px" width="9" height="8" viewBox="0 0 9 8"><path d="M0.7 1.6a.6.6 0 0 1 .6-.6h2.2l1 1.2h3.2a.6.6 0 0 1 .6.6v3.9a.6.6 0 0 1-.6.6H1.3a.6.6 0 0 1-.6-.6z" fill="none" stroke="#8a90a4" stroke-width="0.9"/></svg>
<div class="abs" style="left:48.80px;top:211.10px;line-height:14px;font-size:9.2px;color:#3b4048;white-space:nowrap">file-manager</div>
<svg class="abs" style="left:28.30px;top:231.00px" width="5" height="6" viewBox="0 0 5 6"><path d="M1 0.9 L3.2 3 L1 5.1" fill="none" stroke="#3b4048" stroke-width="1.05"/></svg>
<svg class="abs" style="left:36.80px;top:230.00px" width="9" height="8" viewBox="0 0 9 8"><path d="M0.7 1.6a.6.6 0 0 1 .6-.6h2.2l1 1.2h3.2a.6.6 0 0 1 .6.6v3.9a.6.6 0 0 1-.6.6H1.3a.6.6 0 0 1-.6-.6z" fill="none" stroke="#8a90a4" stroke-width="0.9"/></svg>
<div class="abs" style="left:48.80px;top:226.80px;line-height:14px;font-size:9.2px;color:#3b4048;white-space:nowrap">storage-settings</div>
<svg class="abs" style="left:18.15px;top:246.70px" width="5" height="6" viewBox="0 0 5 6"><path d="M1 0.9 L3.2 3 L1 5.1" fill="none" stroke="#3b4048" stroke-width="1.05"/></svg>
<svg class="abs" style="left:26.65px;top:245.70px" width="9" height="8" viewBox="0 0 9 8"><path d="M0.7 1.6a.6.6 0 0 1 .6-.6h2.2l1 1.2h3.2a.6.6 0 0 1 .6.6v3.9a.6.6 0 0 1-.6.6H1.3a.6.6 0 0 1-.6-.6z" fill="none" stroke="#8a90a4" stroke-width="0.9"/></svg>
<div class="abs" style="left:38.65px;top:242.50px;line-height:14px;font-size:9.2px;color:#3b4048;white-space:nowrap">core</div>
<svg class="abs" style="left:18.15px;top:262.40px" width="5" height="6" viewBox="0 0 5 6"><path d="M1 0.9 L3.2 3 L1 5.1" fill="none" stroke="#3b4048" stroke-width="1.05"/></svg>
<svg class="abs" style="left:26.65px;top:261.40px" width="9" height="8" viewBox="0 0 9 8"><path d="M0.7 1.6a.6.6 0 0 1 .6-.6h2.2l1 1.2h3.2a.6.6 0 0 1 .6.6v3.9a.6.6 0 0 1-.6.6H1.3a.6.6 0 0 1-.6-.6z" fill="none" stroke="#8a90a4" stroke-width="0.9"/></svg>
<div class="abs" style="left:38.65px;top:258.20px;line-height:14px;font-size:9.2px;color:#3b4048;white-space:nowrap">data</div>
<svg class="abs" style="left:17.15px;top:279.10px" width="6" height="5" viewBox="0 0 6 5"><path d="M0.9 1 L3 3.2 L5.1 1" fill="none" stroke="#3b4048" stroke-width="1.05"/></svg>
<svg class="abs" style="left:25.95px;top:277.10px" width="10" height="8" viewBox="0 0 10 8"><path d="M0.7 6.8V1.5a.6.6 0 0 1 .6-.6h2l1 1.1h3a.6.6 0 0 1 .6.6v.7" fill="none" stroke="#b4bdd3" stroke-width="0.9"/><path d="M0.8 7.1 L2.2 3.5h7l-1.4 3.6z" fill="#dfe5f1" stroke="#b4bdd3" stroke-width="0.9" stroke-linejoin="round"/></svg>
<div class="abs" style="left:38.65px;top:273.90px;line-height:14px;font-size:9.2px;color:#3b4048;white-space:nowrap">modules</div>
<div class="abs" style="left:29.50px;top:296.00px;width:1.6px;height:1.6px;border-radius:1px;background:#e3e5e9"></div>
<div class="abs" style="left:35.70px;top:289.80px;line-height:14px;font-size:9.5px;color:#f0a11c;font-weight:bold;transform:scaleX(0.78);transform-origin:0 0">JS</div>
<div class="abs" style="left:48.80px;top:289.60px;line-height:14px;font-size:9.2px;color:#3b4048;white-space:nowrap">animation-syste...</div>
<div class="abs" style="left:0.00px;top:304.65px;width:127px;height:15.7px;background:#e8eaed"></div>
<div class="abs" style="left:29.50px;top:311.70px;width:1.6px;height:1.6px;border-radius:1px;background:#e3e5e9"></div>
<div class="abs" style="left:35.70px;top:305.50px;line-height:14px;font-size:9.5px;color:#f0a11c;font-weight:bold;transform:scaleX(0.78);transform-origin:0 0">JS</div>
<div class="abs" style="left:48.80px;top:305.30px;line-height:14px;font-size:9.2px;color:#1f2329;white-space:nowrap">canvas-manager.js</div>
<div class="abs" style="left:29.50px;top:327.40px;width:1.6px;height:1.6px;border-radius:1px;background:#e3e5e9"></div>
<div class="abs" style="left:35.70px;top:321.20px;line-height:14px;font-size:9.5px;color:#f0a11c;font-weight:bold;transform:scaleX(0.78);transform-origin:0 0">JS</div>
<div class="abs" style="left:48.80px;top:321.00px;line-height:14px;font-size:9.2px;color:#3b4048;white-space:nowrap">canvas-switcher.js</div>
<div class="abs" style="left:29.50px;top:343.10px;width:1.6px;height:1.6px;border-radius:1px;background:#e3e5e9"></div>
<div class="abs" style="left:35.70px;top:336.90px;line-height:14px;font-size:9.5px;color:#f0a11c;font-weight:bold;transform:scaleX(0.78);transform-origin:0 0">JS</div>
<div class="abs" style="left:48.80px;top:336.70px;line-height:14px;font-size:9.2px;color:#3b4048;white-space:nowrap">note-interaction...</div>
<div class="abs" style="left:29.50px;top:358.80px;width:1.6px;height:1.6px;border-radius:1px;background:#e3e5e9"></div>
<div class="abs" style="left:35.70px;top:352.60px;line-height:14px;font-size:9.5px;color:#f0a11c;font-weight:bold;transform:scaleX(0.78);transform-origin:0 0">JS</div>
<div class="abs" style="left:48.80px;top:352.40px;line-height:14px;font-size:9.2px;color:#3b4048;white-space:nowrap">note-manager.js</div>
<div class="abs" style="left:29.50px;top:374.50px;width:1.6px;height:1.6px;border-radius:1px;background:#e3e5e9"></div>
<div class="abs" style="left:35.70px;top:368.30px;line-height:14px;font-size:9.5px;color:#f0a11c;font-weight:bold;transform:scaleX(0.78);transform-origin:0 0">JS</div>
<div class="abs" style="left:48.80px;top:368.10px;line-height:14px;font-size:9.2px;color:#3b4048;white-space:nowrap">note-settings.js</div>
<div class="abs" style="left:29.50px;top:390.20px;width:1.6px;height:1.6px;border-radius:1px;background:#e3e5e9"></div>
<div class="abs" style="left:35.70px;top:384.00px;line-height:14px;font-size:9.5px;color:#f0a11c;font-weight:bold;transform:scaleX(0.78);transform-origin:0 0">JS</div>
<div class="abs" style="left:48.80px;top:383.80px;line-height:14px;font-size:9.2px;color:#3b4048;white-space:nowrap">selection-manag...</div>
<div class="abs" style="left:29.50px;top:405.90px;width:1.6px;height:1.6px;border-radius:1px;background:#e3e5e9"></div>
<div class="abs" style="left:35.70px;top:399.70px;line-height:14px;font-size:9.5px;color:#f0a11c;font-weight:bold;transform:scaleX(0.78);transform-origin:0 0">JS</div>
<div class="abs" style="left:48.80px;top:399.50px;line-height:14px;font-size:9.2px;color:#3b4048;white-space:nowrap">ui-controller.js</div>
<svg class="abs" style="left:18.15px;top:419.40px" width="5" height="6" viewBox="0 0 5 6"><path d="M1 0.9 L3.2 3 L1 5.1" fill="none" stroke="#3b4048" stroke-width="1.05"/></svg>
<svg class="abs" style="left:26.65px;top:418.40px" width="9" height="8" viewBox="0 0 9 8"><path d="M0.7 1.6a.6.6 0 0 1 .6-.6h2.2l1 1.2h3.2a.6.6 0 0 1 .6.6v3.9a.6.6 0 0 1-.6.6H1.3a.6.6 0 0 1-.6-.6z" fill="none" stroke="#8a90a4" stroke-width="0.9"/></svg>
<div class="abs" style="left:38.65px;top:415.20px;line-height:14px;font-size:9.2px;color:#3b4048;white-space:nowrap">utils</div>
<svg class="abs" style="left:7.00px;top:436.10px" width="6" height="5" viewBox="0 0 6 5"><path d="M0.9 1 L3 3.2 L5.1 1" fill="none" stroke="#3b4048" stroke-width="1.05"/></svg>
<svg class="abs" style="left:15.80px;top:434.10px" width="10" height="8" viewBox="0 0 10 8"><path d="M0.7 6.8V1.5a.6.6 0 0 1 .6-.6h2l1 1.1h3a.6.6 0 0 1 .6.6v.7" fill="none" stroke="#b4bdd3" stroke-width="0.9"/><path d="M0.8 7.1 L2.2 3.5h7l-1.4 3.6z" fill="#dfe5f1" stroke="#b4bdd3" stroke-width="0.9" stroke-linejoin="round"/></svg>
<div class="abs" style="left:28.50px;top:430.90px;line-height:14px;font-size:9.2px;color:#3b4048;white-space:nowrap">plan</div>
<div class="abs" style="left:19.35px;top:453.00px;width:1.6px;height:1.6px;border-radius:1px;background:#e3e5e9"></div>
<svg class="abs" style="left:25.55px;top:450.00px" width="10" height="8" viewBox="0 0 10 8"><rect x="0.6" y="0.6" width="8.3" height="6.4" rx="0.5" fill="#e6f0ff" stroke="#3b82f6" stroke-width="1.1"/><path d="M2.3 3.9h2.4M6 3.9h1.2" stroke="#3b82f6" stroke-width="1.2" fill="none"/></svg>
<div class="abs" style="left:38.65px;top:446.60px;line-height:14px;font-size:9.2px;color:#3b4048;white-space:nowrap">01-storage-setting...</div>
<div class="abs" style="left:19.35px;top:468.70px;width:1.6px;height:1.6px;border-radius:1px;background:#e3e5e9"></div>
<svg class="abs" style="left:25.55px;top:465.70px" width="10" height="8" viewBox="0 0 10 8"><rect x="0.6" y="0.6" width="8.3" height="6.4" rx="0.5" fill="#e6f0ff" stroke="#3b82f6" stroke-width="1.1"/><path d="M2.3 3.9h2.4M6 3.9h1.2" stroke="#3b82f6" stroke-width="1.2" fill="none"/></svg>
<div class="abs" style="left:38.65px;top:462.30px;line-height:14px;font-size:9.2px;color:#3b4048;white-space:nowrap">02-unify-close-butt...</div>
<div class="abs" style="left:19.35px;top:484.40px;width:1.6px;height:1.6px;border-radius:1px;background:#e3e5e9"></div>
<svg class="abs" style="left:25.55px;top:481.40px" width="10" height="8" viewBox="0 0 10 8"><rect x="0.6" y="0.6" width="8.3" height="6.4" rx="0.5" fill="#e6f0ff" stroke="#3b82f6" stroke-width="1.1"/><path d="M2.3 3.9h2.4M6 3.9h1.2" stroke="#3b82f6" stroke-width="1.2" fill="none"/></svg>
<div class="abs" style="left:38.65px;top:478.00px;line-height:14px;font-size:9.2px;color:#3b4048;white-space:nowrap">03-css-variables-sy...</div>
<div class="abs" style="left:19.35px;top:500.10px;width:1.6px;height:1.6px;border-radius:1px;background:#e3e5e9"></div>
<svg class="abs" style="left:25.55px;top:497.10px" width="10" height="8" viewBox="0 0 10 8"><rect x="0.6" y="0.6" width="8.3" height="6.4" rx="0.5" fill="#e6f0ff" stroke="#3b82f6" stroke-width="1.1"/><path d="M2.3 3.9h2.4M6 3.9h1.2" stroke="#3b82f6" stroke-width="1.2" fill="none"/></svg>
<div class="abs" style="left:38.65px;top:493.70px;line-height:14px;font-size:9.2px;color:#3b4048;white-space:nowrap">04-file-manager-ic...</div>
<div class="abs" style="left:19.35px;top:515.80px;width:1.6px;height:1.6px;border-radius:1px;background:#e3e5e9"></div>
<svg class="abs" style="left:25.55px;top:512.80px" width="10" height="8" viewBox="0 0 10 8"><rect x="0.6" y="0.6" width="8.3" height="6.4" rx="0.5" fill="#e6f0ff" stroke="#3b82f6" stroke-width="1.1"/><path d="M2.3 3.9h2.4M6 3.9h1.2" stroke="#3b82f6" stroke-width="1.2" fill="none"/></svg>
<div class="abs" style="left:38.65px;top:509.40px;line-height:14px;font-size:9.2px;color:#3b4048;white-space:nowrap">05-drag-drop-colo...</div>
<div class="abs" style="left:19.35px;top:531.50px;width:1.6px;height:1.6px;border-radius:1px;background:#e3e5e9"></div>
<svg class="abs" style="left:25.55px;top:528.50px" width="10" height="8" viewBox="0 0 10 8"><rect x="0.6" y="0.6" width="8.3" height="6.4" rx="0.5" fill="#e6f0ff" stroke="#3b82f6" stroke-width="1.1"/><path d="M2.3 3.9h2.4M6 3.9h1.2" stroke="#3b82f6" stroke-width="1.2" fill="none"/></svg>
<div class="abs" style="left:38.65px;top:525.10px;line-height:14px;font-size:9.2px;color:#3b4048;white-space:nowrap">06-shadow-radius-...</div>
<div class="abs" style="left:19.35px;top:547.20px;width:1.6px;height:1.6px;border-radius:1px;background:#e3e5e9"></div>
<svg class="abs" style="left:25.55px;top:544.20px" width="10" height="8" viewBox="0 0 10 8"><rect x="0.6" y="0.6" width="8.3" height="6.4" rx="0.5" fill="#e6f0ff" stroke="#3b82f6" stroke-width="1.1"/><path d="M2.3 3.9h2.4M6 3.9h1.2" stroke="#3b82f6" stroke-width="1.2" fill="none"/></svg>
<div class="abs" style="left:38.65px;top:540.80px;line-height:14px;font-size:9.2px;color:#3b4048;white-space:nowrap">07-z-index-manag...</div>
<div class="abs" style="left:19.35px;top:562.90px;width:1.6px;height:1.6px;border-radius:1px;background:#e3e5e9"></div>
<svg class="abs" style="left:25.55px;top:559.90px" width="10" height="8" viewBox="0 0 10 8"><rect x="0.6" y="0.6" width="8.3" height="6.4" rx="0.5" fill="#e6f0ff" stroke="#3b82f6" stroke-width="1.1"/><path d="M2.3 3.9h2.4M6 3.9h1.2" stroke="#3b82f6" stroke-width="1.2" fill="none"/></svg>
<div class="abs" style="left:38.65px;top:556.50px;line-height:14px;font-size:9.2px;color:#3b4048;white-space:nowrap">08-font-consolidati...</div>
<div class="abs" style="left:19.35px;top:578.60px;width:1.6px;height:1.6px;border-radius:1px;background:#e3e5e9"></div>
<svg class="abs" style="left:25.55px;top:575.60px" width="10" height="8" viewBox="0 0 10 8"><rect x="0.6" y="0.6" width="8.3" height="6.4" rx="0.5" fill="#e6f0ff" stroke="#3b82f6" stroke-width="1.1"/><path d="M2.3 3.9h2.4M6 3.9h1.2" stroke="#3b82f6" stroke-width="1.2" fill="none"/></svg>
<div class="abs" style="left:38.65px;top:572.20px;line-height:14px;font-size:9.2px;color:#3b4048;white-space:nowrap">overview.md</div>
<svg class="abs" style="left:8.00px;top:592.10px" width="5" height="6" viewBox="0 0 5 6"><path d="M1 0.9 L3.2 3 L1 5.1" fill="none" stroke="#3b4048" stroke-width="1.05"/></svg>
<svg class="abs" style="left:16.50px;top:591.10px" width="9" height="8" viewBox="0 0 9 8"><path d="M0.7 1.6a.6.6 0 0 1 .6-.6h2.2l1 1.2h3.2a.6.6 0 0 1 .6.6v3.9a.6.6 0 0 1-.6.6H1.3a.6.6 0 0 1-.6-.6z" fill="none" stroke="#8a90a4" stroke-width="0.9"/></svg>
<div class="abs" style="left:28.50px;top:587.90px;line-height:14px;font-size:9.2px;color:#3b4048;white-space:nowrap">tests</div>
<div class="abs" style="left:9.20px;top:610.00px;width:1.6px;height:1.6px;border-radius:1px;background:#e3e5e9"></div>
<svg class="abs" style="left:18.00px;top:606.30px" width="6" height="9" viewBox="0 0 6 9"><circle cx="1.5" cy="1.5" r="1" fill="#f26b3a"/><circle cx="4.6" cy="2.6" r="1" fill="#f26b3a"/><circle cx="1.5" cy="7.4" r="1" fill="#f26b3a"/><path d="M1.5 2v5M4.6 3.2c0 1.5-3.1 1-3.1 2.6" fill="none" stroke="#f26b3a" stroke-width="0.9"/></svg>
<div class="abs" style="left:28.50px;top:603.60px;line-height:14px;font-size:9.2px;color:#3b4048;white-space:nowrap">.gitignore</div>
<div class="abs" style="left:9.20px;top:625.70px;width:1.6px;height:1.6px;border-radius:1px;background:#e3e5e9"></div>
<svg class="abs" style="left:15.40px;top:622.70px" width="10" height="8" viewBox="0 0 10 8"><rect x="0.6" y="0.6" width="8.3" height="6.4" rx="0.5" fill="#e6f0ff" stroke="#3b82f6" stroke-width="1.1"/><path d="M2.3 3.9h2.4M6 3.9h1.2" stroke="#3b82f6" stroke-width="1.2" fill="none"/></svg>
<div class="abs" style="left:28.50px;top:619.30px;line-height:14px;font-size:9.2px;color:#3b4048;white-space:nowrap;letter-spacing:-0.5px">AGENTS.md</div>
<div class="abs" style="left:9.20px;top:641.40px;width:1.6px;height:1.6px;border-radius:1px;background:#e3e5e9"></div>
<svg class="abs" style="left:15.40px;top:638.40px" width="10" height="8" viewBox="0 0 10 8"><rect x="0.6" y="0.6" width="8.3" height="6.4" rx="0.5" fill="#e6f0ff" stroke="#3b82f6" stroke-width="1.1"/><path d="M2.3 3.9h2.4M6 3.9h1.2" stroke="#3b82f6" stroke-width="1.2" fill="none"/></svg>
<div class="abs" style="left:28.50px;top:635.00px;line-height:14px;font-size:9.2px;color:#3b4048;white-space:nowrap">Channel.md</div>
<div class="abs" style="left:0.00px;top:648.80px;width:127px;height:1px;background:#eceef1"></div>
<svg class="abs" style="left:5.70px;top:654.20px" width="5" height="6" viewBox="0 0 5 6"><path d="M1 0.9 L3.2 3 L1 5.1" fill="none" stroke="#3b4048" stroke-width="1.05"/></svg>
<div class="abs" style="left:15.00px;top:650.40px;line-height:14px;font-size:9.1px;font-weight:bold;color:#1f2329;white-space:nowrap">大纲</div>
<div class="abs" style="left:0.00px;top:664.80px;width:127px;height:1px;background:#eceef1"></div>
<svg class="abs" style="left:5.70px;top:670.00px" width="5" height="6" viewBox="0 0 5 6"><path d="M1 0.9 L3.2 3 L1 5.1" fill="none" stroke="#3b4048" stroke-width="1.05"/></svg>
<div class="abs" style="left:15.00px;top:666.00px;line-height:14px;font-size:9.1px;font-weight:bold;color:#1f2329;white-space:nowrap">时间线</div>
<!--/EXPLORER--></div>
<div id="status"><!--STATUS-->
<div class="abs" style="left:448px;top:712px;width:576px;height:16px;background:#cfd3da"></div>
<div class="abs" style="left:448px;top:726.5px;width:576px;height:1.5px;background:#c6cad2"></div>
<svg class="abs" style="left:457.40px;top:715.00px" width="10" height="10" viewBox="0 0 10 10"><circle cx="4.8" cy="4.8" r="4.7" fill="#3b4048"/><path d="M3.1 3.1 L6.5 6.5 M6.5 3.1 L3.1 6.5" stroke="#dfe2e8" stroke-width="1"/></svg>
<div class="abs" style="left:469.60px;top:713.00px;line-height:14px;font-size:8.4px;color:#4a505a;white-space:nowrap;color:#6b7280">0</div>
<svg class="abs" style="left:476.70px;top:715.50px" width="10" height="9" viewBox="0 0 10 9"><path d="M4.9 0.4 L9.6 8.3 H0.2z" fill="#3b4048"/><path d="M4.9 3.3v2.6M4.9 6.7v0.8" stroke="#dfe2e8" stroke-width="0.9"/></svg>
<div class="abs" style="left:489.00px;top:713.00px;line-height:14px;font-size:8.4px;color:#4a505a;white-space:nowrap;color:#6b7280">0</div>
<svg class="abs" style="left:497.80px;top:715.80px" width="10" height="9" viewBox="0 0 10 9"><rect x="0" y="0.2" width="9.4" height="6" rx="0.5" fill="#3b4048"/><path d="M2 7.8h5.4" stroke="#3b4048" stroke-width="0.9"/><path d="M2.4 2v2.4M4 2v2.4M5.6 2v2.4M7.2 2v2.4" stroke="#dfe2e8" stroke-width="0.6"/></svg>
<div class="abs" style="left:731.50px;top:712.80px;line-height:14px;font-size:8.4px;color:#4a505a;white-space:nowrap;font-size:8.03px;color:#555b65">行 596, 列 8 (已选择563)</div>
<div class="abs" style="left:827.50px;top:712.80px;line-height:14px;font-size:8.4px;color:#4a505a;white-space:nowrap;font-size:7.85px;color:#555b65">空格: 4</div>
<div class="abs" style="left:860.00px;top:712.80px;line-height:14px;font-size:8.4px;color:#4a505a;white-space:nowrap;color:#555b65;transform:scaleX(.89);transform-origin:0 0">UTF-8</div>
<div class="abs" style="left:889.20px;top:712.80px;line-height:14px;font-size:8.4px;color:#4a505a;white-space:nowrap;color:#555b65;transform:scaleX(.85);transform-origin:0 0">LF</div>
<div class="abs" style="left:906.60px;top:712.30px;line-height:14px;font-size:8.4px;color:#4a505a;white-space:nowrap;font-size:9px;color:#555b65">{ }</div>
<div class="abs" style="left:925.60px;top:712.80px;line-height:14px;font-size:8.4px;color:#4a505a;white-space:nowrap;color:#555b65;transform:scaleX(.857);transform-origin:0 0">JavaScript</div>
<svg class="abs" style="left:969.50px;top:715.80px" width="8" height="8" viewBox="0 0 8 8"><path d="M4 0.3v7.4M0.8 2.1 L7.2 5.9 M7.2 2.1 L0.8 5.9" stroke="#8a9099" stroke-width="0.8"/></svg>
<div class="abs" style="left:980.00px;top:712.80px;line-height:14px;font-size:8.4px;color:#4a505a;white-space:nowrap;font-size:7.8px;color:#8a9099;text-decoration:line-through;transform:scaleX(.78);transform-origin:0 0">CUE</div>
<svg class="abs" style="left:1004.50px;top:714.80px" width="10" height="10" viewBox="0 0 10 10"><path d="M5 1a3 3 0 0 1 3 3v2.2l.9 1.3H1.1L2 6.2V4a3 3 0 0 1 3-3z" fill="none" stroke="#2b2f36" stroke-width="0.9" stroke-linejoin="round"/><path d="M4 8.6a1 1 0 0 0 2 0" fill="none" stroke="#2b2f36" stroke-width="0.9"/></svg>
<!--/STATUS--></div>
</body>
</html>
